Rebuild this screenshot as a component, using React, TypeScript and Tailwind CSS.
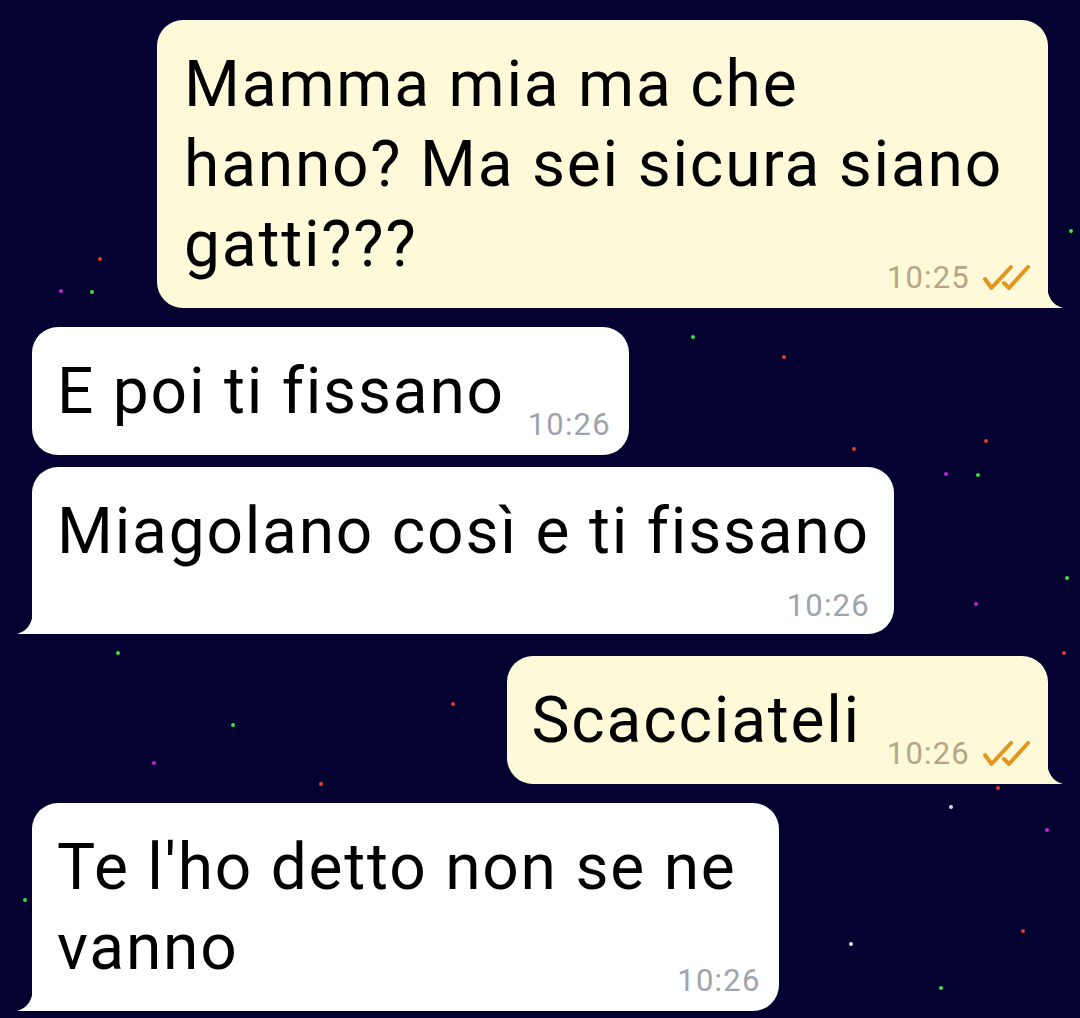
type Message = {
  id: number
  outgoing: boolean
  lines: string[]
  time: string
  tail: boolean
  timeBelow?: boolean
  wrap: string
}

const messages: Message[] = [
  {
    id: 1,
    outgoing: true,
    lines: ['Mamma mia ma che', 'hanno? Ma sei sicura siano', 'gatti???'],
    time: '10:25',
    tail: true,
    wrap: 'mt-[20px] pr-[45px] pl-[27px]',
  },
  {
    id: 2,
    outgoing: false,
    lines: ['E poi ti fissano'],
    time: '10:26',
    tail: false,
    wrap: 'mt-[19px] pr-[124px] pl-[25px]',
  },
  {
    id: 3,
    outgoing: false,
    lines: ['Miagolano così e ti fissano'],
    time: '10:26',
    tail: true,
    timeBelow: true,
    wrap: 'mt-[12px] pr-[24px] pl-[25px]',
  },
  {
    id: 4,
    outgoing: true,
    lines: ['Scacciateli'],
    time: '10:26',
    tail: true,
    wrap: 'mt-[22px] pr-[187px] pl-[25px]',
  },
  {
    id: 5,
    outgoing: false,
    lines: ["Te l'ho detto non se ne", 'vanno'],
    time: '10:26',
    tail: true,
    wrap: 'mt-[19px] pr-[42px] pl-[25px]',
  },
]

// background specks
const stars = [
  { x: 98, y: 257, c: '#e23a2a' },
  { x: 59, y: 289, c: '#c21fd6' },
  { x: 90, y: 290, c: '#3be03a' },
  { x: 1069, y: 229, c: '#3be03a' },
  { x: 691, y: 335, c: '#3be03a' },
  { x: 782, y: 355, c: '#e23a2a' },
  { x: 852, y: 447, c: '#e23a2a' },
  { x: 984, y: 439, c: '#e23a2a' },
  { x: 944, y: 472, c: '#c21fd6' },
  { x: 976, y: 473, c: '#3be03a' },
  { x: 1065, y: 576, c: '#3be03a' },
  { x: 974, y: 602, c: '#c21fd6' },
  { x: 116, y: 651, c: '#3be03a' },
  { x: 1062, y: 651, c: '#e23a2a' },
  { x: 451, y: 702, c: '#e23a2a' },
  { x: 231, y: 723, c: '#3be03a' },
  { x: 152, y: 761, c: '#c21fd6' },
  { x: 319, y: 782, c: '#e23a2a' },
  { x: 996, y: 786, c: '#e23a2a' },
  { x: 949, y: 805, c: '#d8d8e8' },
  { x: 1045, y: 828, c: '#c21fd6' },
  { x: 23, y: 898, c: '#3be03a' },
  { x: 849, y: 942, c: '#e8e8f0' },
  { x: 1021, y: 929, c: '#e23a2a' },
  { x: 939, y: 986, c: '#3be03a' },
]

function DoubleCheck() {
  return (
    <svg width="48" height="26" viewBox="0 0 48 26" fill="none">
      <path
        d="M3 14 L9.5 23 L29 2"
        stroke="#e2951f"
        strokeWidth="4"
        strokeLinecap="round"
        strokeLinejoin="round"
      />
      <path
        d="M22 18 L27 23 L46 2"
        stroke="#e2951f"
        strokeWidth="4"
        strokeLinecap="round"
        strokeLinejoin="round"
      />
    </svg>
  )
}

function Tail({ outgoing, color }: { outgoing: boolean; color: string }) {
  if (outgoing) {
    return (
      <svg
        className="absolute bottom-0 right-[-15px]"
        width="16"
        height="24"
        viewBox="0 0 16 24"
      >
        <path d="M0 0 C0 12 5 21 16 24 L0 24 Z" fill={color} />
      </svg>
    )
  }
  return (
    <svg
      className="absolute bottom-0 left-[-15px]"
      width="16"
      height="24"
      viewBox="0 0 16 24"
    >
      <path d="M16 0 C16 12 11 21 0 24 L16 24 Z" fill={color} />
    </svg>
  )
}

function Stamp({ msg }: { msg: Message }) {
  return (
    <span
      className={
        msg.outgoing
          ? 'flex items-center gap-[12px] text-[31px] leading-[36px] tracking-[1.2px] text-[#b6a685]'
          : 'flex items-center text-[31px] leading-[36px] tracking-[1.2px] text-[#9fa3ad]'
      }
    >
      {msg.time}
      {msg.outgoing && <DoubleCheck />}
    </span>
  )
}

function Bubble({ msg }: { msg: Message }) {
  const bg = msg.outgoing ? '#fefad9' : '#ffffff'

  return (
    <div
      className={[
        'relative pt-[25px] text-[64px] leading-[80px] tracking-[1.8px] text-black',
        msg.outgoing ? 'mr-[32px] self-end bg-[#fefad9]' : 'ml-[32px] self-start bg-white',
        msg.tail
          ? msg.outgoing
            ? 'rounded-[26px] rounded-br-none'
            : 'rounded-[26px] rounded-bl-none'
          : 'rounded-[26px]',
        msg.timeBelow ? 'pb-[10px]' : 'pb-[23px]',
        msg.wrap,
      ].join(' ')}
    >
      <p>
        {msg.lines.map((line, i) => (
          <span key={i} className="block whitespace-nowrap">
            {line}
          </span>
        ))}
      </p>
      {msg.timeBelow ? (
        <div className="mt-[16px] flex justify-end">
          <Stamp msg={msg} />
        </div>
      ) : (
        <div className="absolute bottom-[12px] right-[18px]">
          <Stamp msg={msg} />
        </div>
      )}
      {msg.tail && <Tail outgoing={msg.outgoing} color={bg} />}
    </div>
  )
}

export default function App() {
  return (
    <div className="relative flex h-[1018px] w-full flex-col overflow-hidden bg-[#030230] font-[Roboto,'Noto_Sans',sans-serif]">
      {stars.map((s, i) => (
        <span
          key={i}
          className="absolute h-[4px] w-[4px] rounded-full"
          style={{ left: s.x, top: s.y, backgroundColor: s.c }}
        />
      ))}
      {messages.map((m) => (
        <Bubble key={m.id} msg={m} />
      ))}
    </div>
  )
}
